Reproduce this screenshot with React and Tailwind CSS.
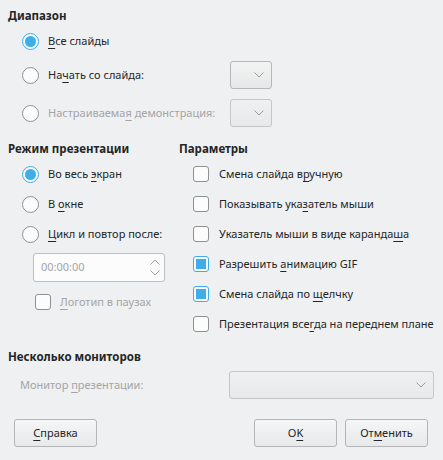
import React from 'react';

function U({ children }) {
  return <span className="underline underline-offset-[3px] decoration-[1px]">{children}</span>;
}

function Chevron({ className = '' }) {
  return (
    <svg width="10" height="6" viewBox="0 0 10 6" className={className}>
      <path d="M0.5 0.5 L5 5 L9.5 0.5" fill="none" stroke="#9a9c9e" strokeWidth="1" />
    </svg>
  );
}

function Radio({ checked }) {
  if (checked) {
    return (
      <div className="w-[17px] h-[17px] rounded-full border border-[#3daee9] bg-[#f4f9fc] flex items-center justify-center shrink-0">
        <div className="w-[11px] h-[11px] rounded-full bg-[#3daee9]" />
      </div>
    );
  }
  return <div className="w-[17px] h-[17px] rounded-full border border-[#8e9092] bg-[#fcfcfc] shrink-0" />;
}

function Check({ checked }) {
  if (checked) {
    return (
      <div className="w-4 h-4 rounded-[3px] border border-[#3daee9] bg-[#fcfcfc] flex items-center justify-center shrink-0">
        <div className="w-[10px] h-[10px] bg-[#3daee9]" />
      </div>
    );
  }
  return <div className="w-4 h-4 rounded-[3px] border border-[#8e9092] bg-[#fcfcfc] shrink-0" />;
}

function Combo({ className = '', disabled }) {
  return (
    <div
      className={
        'h-[28px] rounded-[3px] border flex items-center justify-end pr-[7px] bg-gradient-to-b shrink-0 ' +
        (disabled
          ? 'border-[#c4c6c8] from-[#eff0f1] to-[#e8e9ea] '
          : 'border-[#b5b7b9] from-[#f2f3f3] to-[#e6e7e8] ') +
        className
      }
    >
      <Chevron />
    </div>
  );
}

function Button({ children, className = '' }) {
  return (
    <div
      className={
        'h-[28px] rounded-[3px] border border-[#b3b5b7] bg-gradient-to-b from-[#f5f6f6] to-[#e8e9ea] flex items-center justify-center shrink-0 ' +
        className
      }
    >
      {children}
    </div>
  );
}

export default function App() {
  const params = [
    { label: <>Смена слайда в<U>р</U>учную</>, checked: false },
    { label: <>Показывать ука<U>з</U>атель мыши</>, checked: false },
    { label: <>Указатель мыши в виде каранда<U>ш</U>а</>, checked: false },
    { label: <>Разрешить <U>а</U>нимацию GIF</>, checked: true },
    { label: <>Смена слайда по <U>щ</U>елчку</>, checked: true },
    { label: <>Презентация все<U>г</U>да на переднем плане</>, checked: false },
  ];

  return (
    <div
      className="w-[443px] h-[460px] bg-[#eff0f1] text-[#232627] text-[11px] pl-2 overflow-hidden whitespace-nowrap"
      style={{ fontFamily: '"Noto Sans", sans-serif' }}
    >
      {/* Диапазон */}
      <div className="pt-2 h-6 leading-4 font-bold text-[11.5px]">Диапазон</div>
      <div className="mt-[6px] h-[22px] flex items-center pl-[14px]">
        <Radio checked />
        <span className="ml-[9px]"><U>В</U>се слайды</span>
      </div>
      <div className="mt-[9px] h-[28px] flex items-center">
        <div className="w-[222px] shrink-0 flex items-center pl-[14px]">
          <Radio />
          <span className="ml-[9px]">На<U>ч</U>ать со слайда:</span>
        </div>
        <Combo className="w-[42px]" />
      </div>
      <div className="mt-[10px] h-[28px] flex items-center">
        <div className="w-[222px] shrink-0 flex items-center pl-[14px]">
          <Radio />
          <span className="ml-[9px] text-[#a3a5a7]">Настраиваема<U>я</U> демонстрация:</span>
        </div>
        <Combo className="w-[42px]" disabled />
      </div>

      {/* Режим / Параметры */}
      <div className="mt-[14px] flex">
        <div className="w-[171px] shrink-0">
          <div className="h-4 leading-4 font-bold text-[11.5px]">Режим презентации</div>
          <div className="mt-[2px] h-[30px] flex items-center pl-[14px]">
            <Radio checked />
            <span className="ml-[9px]">Во весь <U>э</U>кран</span>
          </div>
          <div className="h-[30px] flex items-center pl-[14px]">
            <Radio />
            <span className="ml-[9px]">В <U>о</U>кне</span>
          </div>
          <div className="h-[30px] flex items-center pl-[14px]">
            <Radio />
            <span className="ml-[9px]"><U>Ц</U>икл и повтор после:</span>
          </div>
          <div className="mt-[4px] ml-[25px] w-[132px] h-[29px] rounded-[3px] border border-[#bdbfc1] bg-[#fcfcfc] flex items-center justify-between pl-[7px] pr-[4px] text-[#a3a5a7]">
            <span>00:00:00</span>
            <div className="flex flex-col gap-[5px]">
              <Chevron className="rotate-180" />
              <Chevron />
            </div>
          </div>
          <div className="mt-[5px] h-[30px] flex items-center pl-[27px]">
            <Check />
            <span className="ml-[9px] text-[#a3a5a7]"><U>Л</U>оготип в паузах</span>
          </div>
        </div>
        <div>
          <div className="h-4 leading-4 font-bold text-[11.5px]">Параметры</div>
          <div className="mt-[2px]">
            {params.map((p, i) => (
              <div key={i} className="h-[30px] flex items-center pl-[14px]">
                <Check checked={p.checked} />
                <span className="ml-[10px]">{p.label}</span>
              </div>
            ))}
          </div>
        </div>
      </div>

      {/* Несколько мониторов */}
      <div className="mt-[10px] h-4 leading-4 font-bold text-[11.5px]">Несколько мониторов</div>
      <div className="mt-[6px] flex items-center">
        <div className="w-[221px] shrink-0 pl-[12px] text-[#a3a5a7]">
          Монитор <U>п</U>резентации:
        </div>
        <Combo className="w-[205px]" disabled />
      </div>

      <div className="mt-[20px] flex items-center pr-[15px]">
        <Button className="ml-[6px] w-[83px]"><span><U>С</U>правка</span></Button>
        <div className="flex-1" />
        <Button className="w-[83px]"><span>O<U>K</U></span></Button>
        <Button className="ml-[8px] w-[83px]"><span>От<U>м</U>енить</span></Button>
      </div>
    </div>
  );
}
